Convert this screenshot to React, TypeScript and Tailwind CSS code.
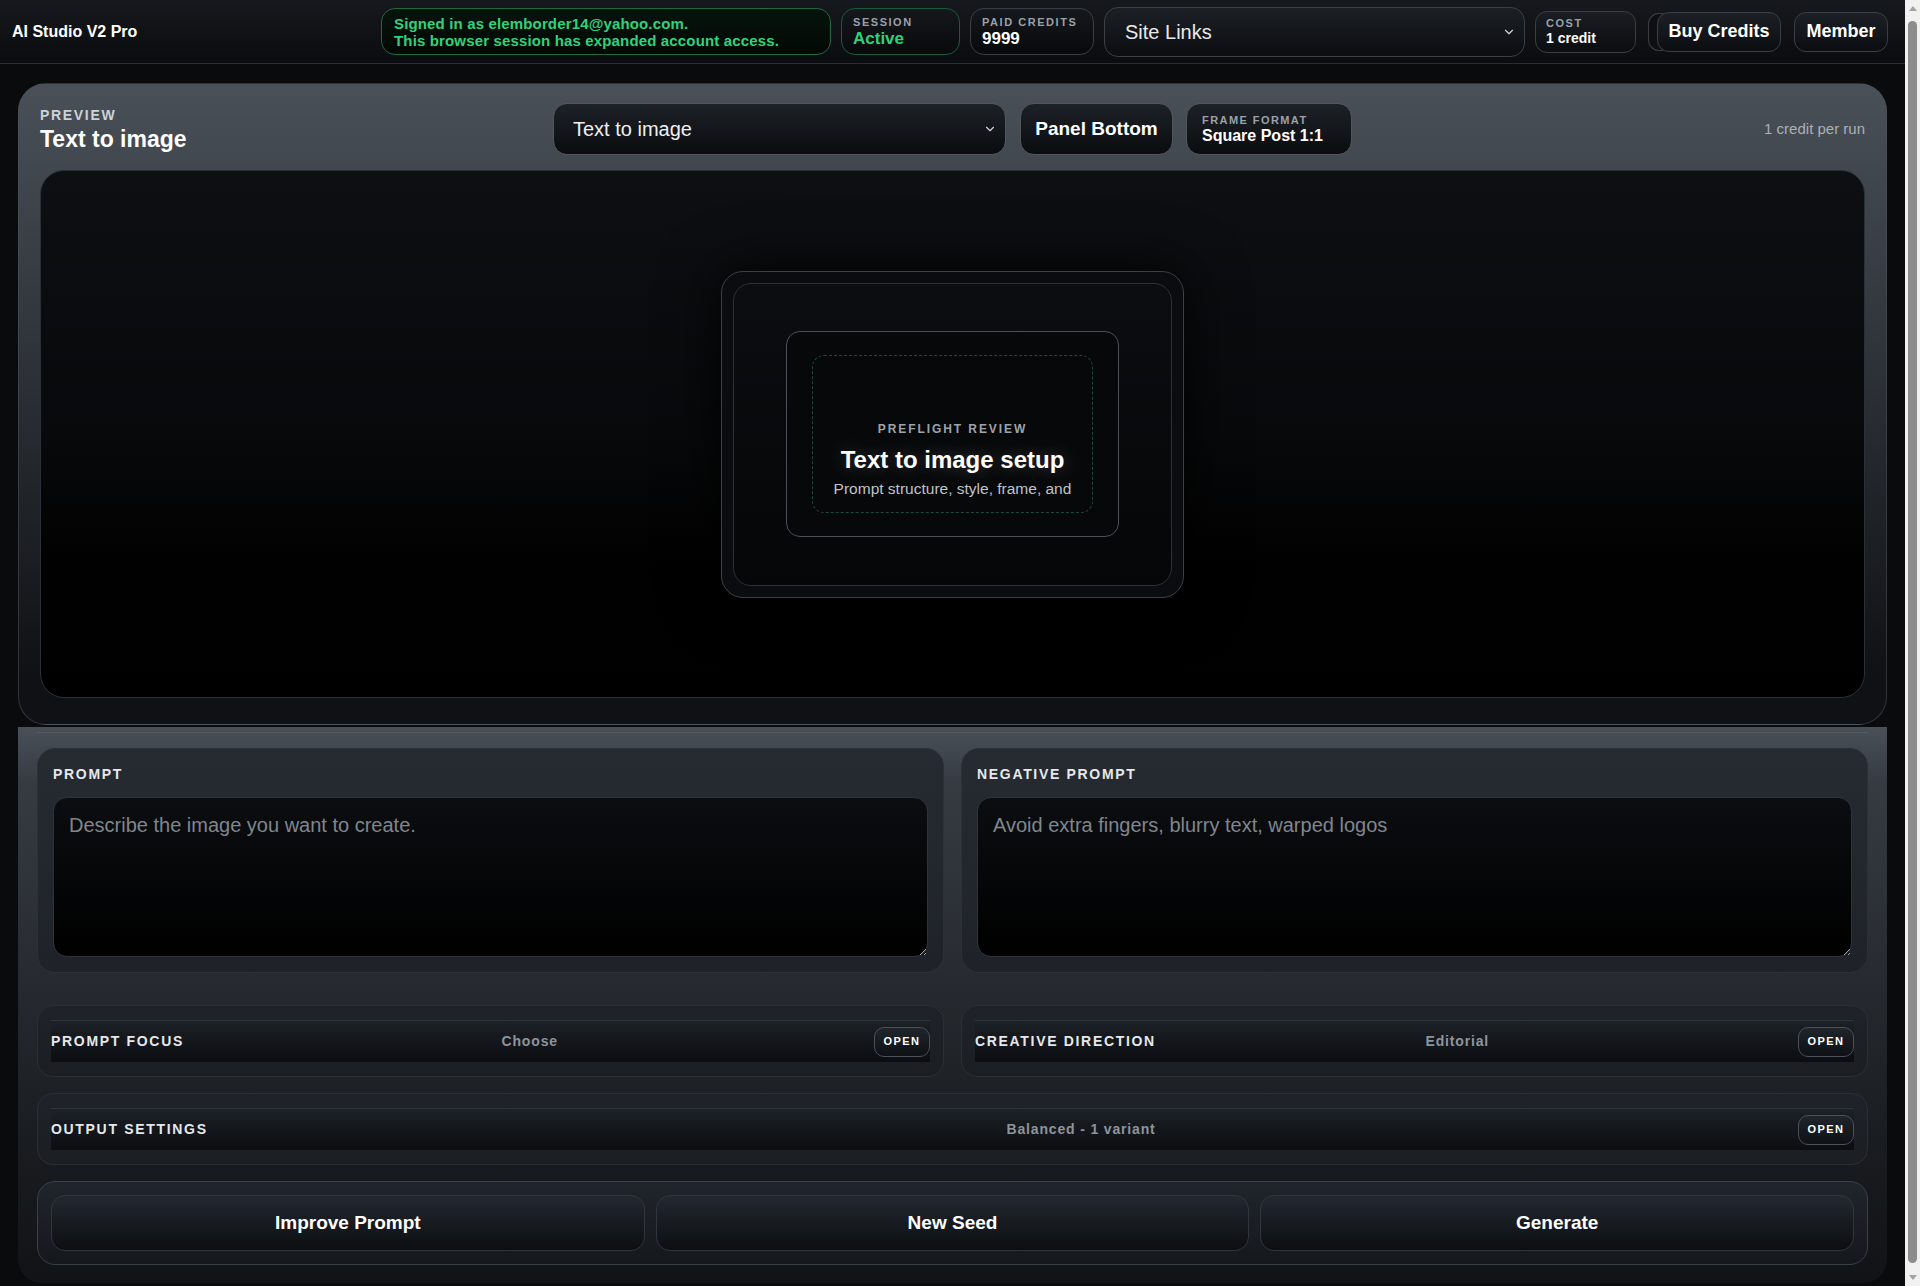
import { ChevronDown } from "lucide-react";

const LABEL = "font-bold uppercase";

function HeaderStat({
  label,
  value,
  green,
  className,
}: {
  label: string;
  value: string;
  green?: boolean;
  className: string;
}) {
  return (
    <div
      className={
        "flex flex-col justify-center rounded-[14px] border px-[11px] bg-[linear-gradient(180deg,#15181c,#08090b)] " +
        (green ? "border-[#1d5a3c] " : "border-[#3a3f46] ") +
        className
      }
    >
      <span className="text-[11px] leading-[13px] font-bold uppercase tracking-[0.14em] text-[#9aa1a9]">
        {label}
      </span>
      <span
        className={
          "text-[17px] leading-[19px] font-bold " +
          (green ? "text-[#2fd27a]" : "text-white")
        }
      >
        {value}
      </span>
    </div>
  );
}

function Header() {
  return (
    <header className="h-[64px] flex items-center pl-[12px] pr-[17px] border-b border-[#2a2d32] bg-[linear-gradient(180deg,#16191d,#0b0c0f)]">
      <span className="text-[16px] font-bold text-white">AI Studio V2 Pro</span>
      <div className="ml-auto flex items-center gap-[10px]">
        <div className="w-[450px] h-[47px] flex flex-col justify-center rounded-[14px] border border-[#1f6a45] bg-[linear-gradient(180deg,#06140d,#020805)] px-[12px] text-[15px] leading-[17px] font-bold tracking-[0.01em] text-[#31d27b]">
          <span>Signed in as elemborder14@yahoo.com.</span>
          <span>This browser session has expanded account access.</span>
        </div>
        <HeaderStat label="Session" value="Active" green className="w-[119px] h-[47px]" />
        <HeaderStat label="Paid Credits" value="9999" className="w-[124px] h-[47px]" />
        <div className="w-[421px] h-[50px] flex items-center justify-between rounded-[14px] border border-[#3b4047] bg-[linear-gradient(180deg,#1c2026,#0b0d10)] pl-[20px] pr-[8px]">
          <span className="text-[20px] text-[#e8eaed]">Site Links</span>
          <ChevronDown size={14} strokeWidth={2} className="text-[#d1d5db]" />
        </div>
        <div className="w-[101px] h-[42px] flex flex-col justify-center rounded-[12px] border border-[#3a3f46] bg-[linear-gradient(180deg,#1a1d22,#0b0d10)] px-[10px]">
          <span className="text-[11px] leading-[13px] font-bold uppercase tracking-[0.14em] text-[#9aa1a9]">
            Cost
          </span>
          <span className="text-[14px] leading-[16px] font-bold text-white">1 credit</span>
        </div>
        <button className="ml-[11px] w-[124px] h-[40px] rounded-[12px] border border-[#3a3f46] bg-[linear-gradient(180deg,#1c2026,#0b0d10)] text-[18px] font-bold text-white shadow-[-10px_0_0_-2px_#0d0f12,-10px_0_0_-1px_#3a3f46]">
          Buy Credits
        </button>
        <button className="ml-[3px] w-[94px] h-[40px] rounded-[12px] border border-[#3a3f46] bg-[linear-gradient(180deg,#1c2026,#0b0d10)] text-[18px] font-bold text-white">
          Member
        </button>
      </div>
    </header>
  );
}

function PreviewPanel() {
  return (
    <section className="rounded-[28px] border border-[#50565e]/50 bg-[linear-gradient(180deg,#4a5058_0%,#42484f_12%,#30353b_40%,#1d2025_70%,#0f1114_93%)] px-[21px] pt-[19px] pb-[26px]">
      <div className="grid grid-cols-[1fr_auto_1fr] items-center h-[52px]">
        <div className="flex flex-col gap-[3px]">
          <span className={LABEL + " text-[14px] leading-[16px] tracking-[0.12em] text-[#cdd2d8]"}>
            Preview
          </span>
          <span className="text-[23px] leading-[26px] font-bold text-white">Text to image</span>
        </div>
        <div className="flex items-center">
          <div className="w-[453px] h-[52px] flex items-center justify-between rounded-[14px] border border-[#50565e] bg-[linear-gradient(180deg,#1d2127,#0a0c0f)] pl-[19px] pr-[8px]">
            <span className="text-[20px] text-[#eef0f2]">Text to image</span>
            <ChevronDown size={14} strokeWidth={2} className="text-[#d1d5db]" />
          </div>
          <button className="ml-[14px] w-[153px] h-[52px] rounded-[14px] border border-[#50565e] bg-[linear-gradient(180deg,#1d2127,#0a0c0f)] text-[19px] font-bold text-white">
            Panel Bottom
          </button>
          <div className="ml-[13px] w-[166px] h-[52px] flex flex-col justify-center rounded-[14px] border border-[#50565e] bg-[linear-gradient(180deg,#1d2127,#0a0c0f)] px-[15px]">
            <span className="text-[11px] leading-[12px] font-bold uppercase tracking-[0.13em] text-[#9aa1a9]">
              Frame Format
            </span>
            <span className="text-[16px] leading-[19px] font-bold text-white">Square Post 1:1</span>
          </div>
        </div>
        <span className="justify-self-end text-[15px] text-[#aab0b7]">1 credit per run</span>
      </div>

      <div className="mt-[15px] h-[528px] flex items-center justify-center rounded-[24px] border border-[#2b3037] bg-[linear-gradient(180deg,#0d0f12_0%,#08090b_50%,#010101_75%,#000_100%)]">
        <div className="w-[463px] h-[327px] rounded-[22px] border border-[#3b4047] bg-[#0a0c0f] p-[11px] shadow-[0_0_60px_rgba(0,0,0,0.9)]">
          <div className="h-full flex items-center justify-center rounded-[18px] border border-[#2c3137] bg-[linear-gradient(180deg,#0b0d10,#050607)]">
            <div className="w-[333px] h-[206px] rounded-[14px] border border-[#4b5057] bg-[#07080a] px-[25px] py-[23px]">
              <div className="h-full flex flex-col items-center overflow-hidden rounded-[12px] border border-dashed border-[#1f4a39] pt-[66px]">
                <span className="text-[12px] leading-[14px] font-bold uppercase tracking-[0.16em] text-[#9ea3aa]">
                  Preflight review
                </span>
                <span className="mt-[10px] text-[24px] leading-[28px] font-bold text-white [text-shadow:0_0_18px_rgba(255,255,255,0.25)]">
                  Text to image setup
                </span>
                <span className="mt-[6px] whitespace-nowrap text-[15.5px] leading-[18px] text-[#bfc3c9]">
                  Prompt structure, style, frame, and
                </span>
              </div>
            </div>
          </div>
        </div>
      </div>
    </section>
  );
}

function PromptCard({ label, placeholder }: { label: string; placeholder: string }) {
  return (
    <div className="rounded-[18px] border border-[#2c3138] bg-[linear-gradient(180deg,#262b32,#1f2329)] px-[15px] pt-[17px] pb-[15px]">
      <div className={LABEL + " text-[14px] leading-[16px] tracking-[0.12em] text-[#e6e8eb]"}>{label}</div>
      <textarea
        placeholder={placeholder}
        className="mt-[15px] block w-full h-[160px] resize-y rounded-[14px] border border-[#2e333a] bg-[linear-gradient(180deg,#0b0d10,#000)] px-[15px] py-[15px] text-[20px] leading-[24px] text-white placeholder:text-[#80868d] outline-none"
      />
    </div>
  );
}

function OpenButton() {
  return (
    <button className="w-[56px] h-[30px] rounded-[10px] border border-[#4b5159] bg-[linear-gradient(180deg,#20252c,#0e1114)] text-[11px] font-bold uppercase tracking-[0.13em] text-white">
      Open
    </button>
  );
}

function SettingRow({
  label,
  value,
  valueClass = "",
}: {
  label: string;
  value: string;
  valueClass?: string;
}) {
  return (
    <div className="rounded-[16px] border border-[#2a2f35] bg-[linear-gradient(180deg,#1f2329,#1b1f24)] px-[13px] py-[14px]">
      <div className="h-[42px] grid grid-cols-2 gap-[22px] items-center border-t border-[#2f353c] bg-[linear-gradient(180deg,#1c2127,#0b0d10)]">
        <span className={LABEL + " text-[14px] tracking-[0.12em] text-[#e6e8eb] whitespace-nowrap"}>
          {label}
        </span>
        <div className="flex items-center justify-between">
          <span className={"text-[14px] font-bold tracking-[0.06em] text-[#8e949b] " + valueClass}>
            {value}
          </span>
          <OpenButton />
        </div>
      </div>
    </div>
  );
}

function ActionButton({ children }: { children: string }) {
  return (
    <button className="h-[56px] rounded-[14px] border border-[#30363d] bg-[linear-gradient(180deg,#232830,#0c0e11)] text-[19px] font-bold text-white">
      {children}
    </button>
  );
}

function Dock() {
  return (
    <section className="mt-[2px] rounded-b-[24px] bg-[linear-gradient(180deg,#4a5058_0%,#363b42_10%,#272b31_45%,#191c20_75%,#111316_100%)] px-[19px] pb-[18px]">
      <div className="pt-[5px]">
        <div className="h-px bg-[#545a62]" />
      </div>
      <div className="pt-[15px]">
        <div className="grid grid-cols-2 gap-[17px]">
          <PromptCard label="Prompt" placeholder="Describe the image you want to create." />
          <PromptCard label="Negative prompt" placeholder="Avoid extra fingers, blurry text, warped logos" />
        </div>
        <div className="mt-[32px] grid grid-cols-2 gap-[17px]">
          <SettingRow label="Prompt focus" value="Choose" />
          <SettingRow label="Creative direction" value="Editorial" />
        </div>
        <div className="mt-[16px]">
          <SettingRow label="Output settings" value="Balanced - 1 variant" valueClass="ml-[43px]" />
        </div>
        <div className="mt-[16px] rounded-[18px] border border-[#3a4048] bg-[linear-gradient(180deg,#20252b,#15181d)] p-[13px]">
          <div className="grid grid-cols-3 gap-[11px]">
            <ActionButton>Improve Prompt</ActionButton>
            <ActionButton>New Seed</ActionButton>
            <ActionButton>Generate</ActionButton>
          </div>
        </div>
      </div>
    </section>
  );
}

// the browser's scroll bar, as it shows in the picture
function ScrollStrip() {
  return (
    <aside className="sticky top-0 h-screen w-[15px] shrink-0 flex flex-col items-center bg-[#f1f1f1]">
      <div className="h-[17px] flex items-center justify-center">
        <div className="w-0 h-0 border-x-[4px] border-x-transparent border-b-[5px] border-b-[#a3a3a3]" />
      </div>
      <div className="flex-1 w-[9px] rounded-full bg-[#8d8d8d] mt-[4px] mb-[6px]" />
      <div className="h-[17px] flex items-center justify-center">
        <div className="w-0 h-0 border-x-[4px] border-x-transparent border-t-[5px] border-t-[#a3a3a3]" />
      </div>
    </aside>
  );
}

export default function App() {
  return (
    <div className="flex min-h-screen bg-[#0a0b0d] font-['Liberation_Sans',Arial,sans-serif] text-white">
      <div className="flex-1 min-w-0">
        <Header />
        <main className="px-[18px] pt-[19px] pb-[18px]">
          <PreviewPanel />
          <Dock />
        </main>
      </div>
      <ScrollStrip />
    </div>
  );
}
